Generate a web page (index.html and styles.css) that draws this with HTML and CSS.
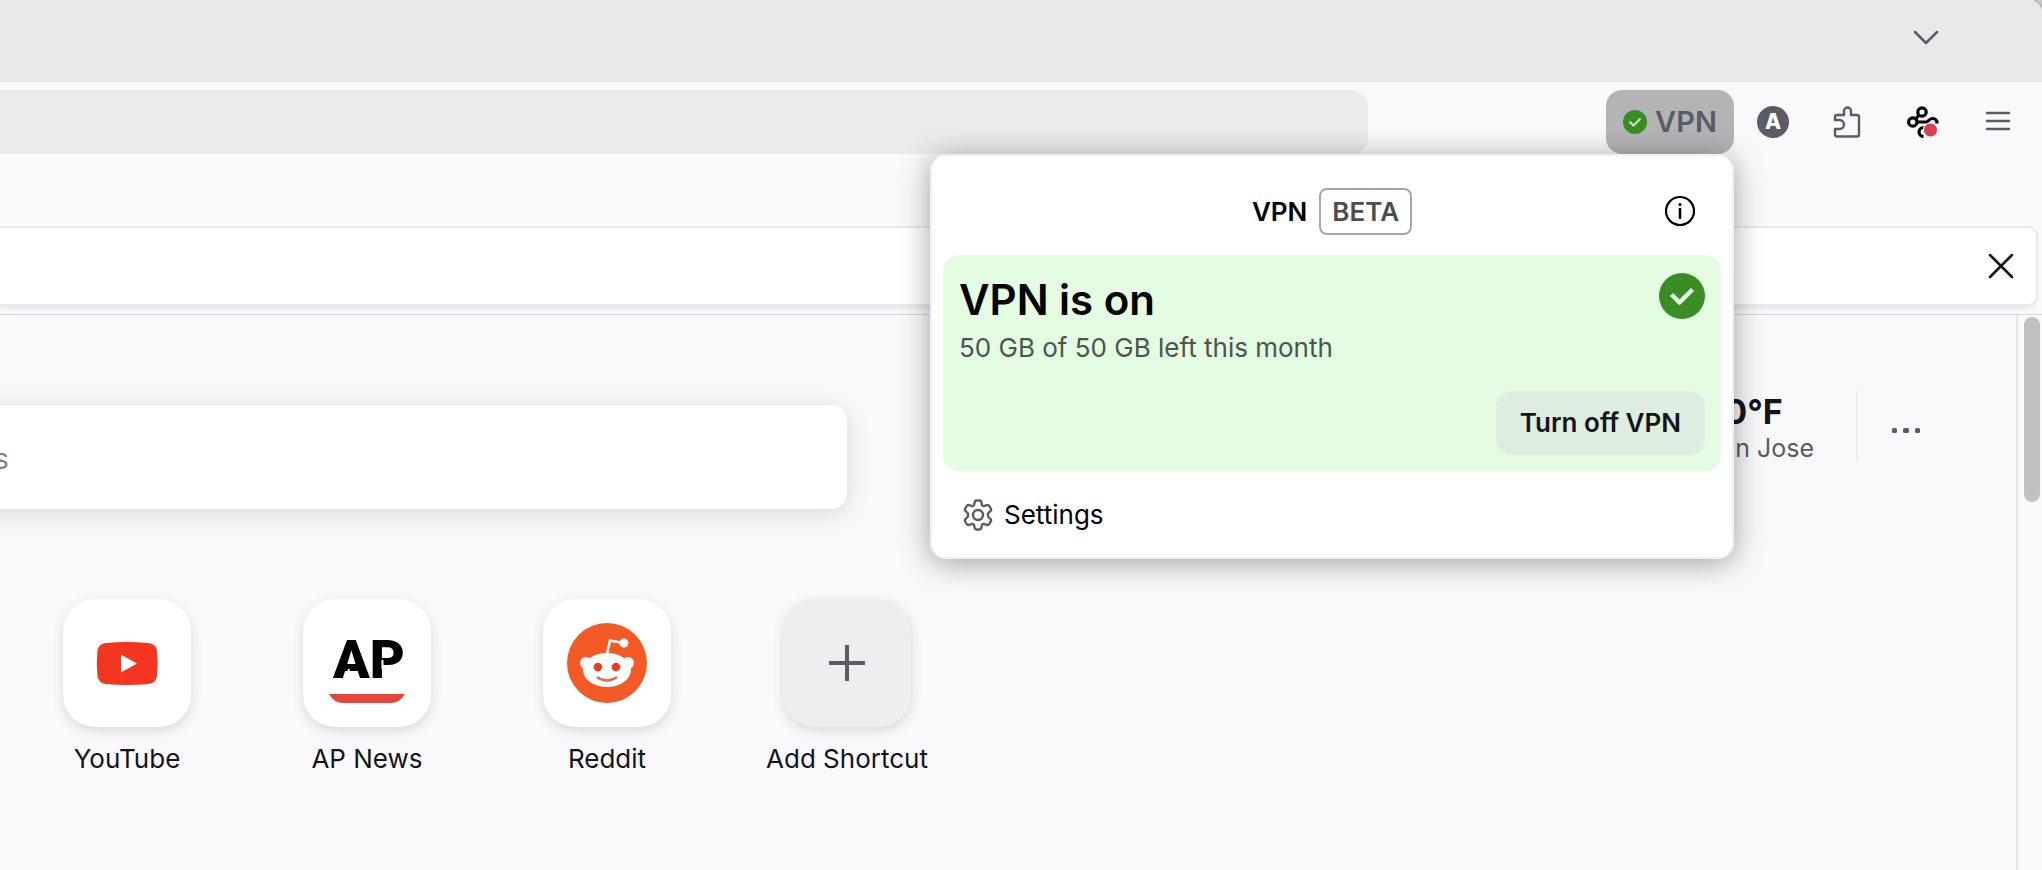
FILE: index.html
```html
<!DOCTYPE html>
<html lang="en">
<head>
    <meta charset="UTF-8">
    <meta name="viewport" content="width=device-width, initial-scale=1.0">
    <title>New Tab</title>
    <link rel="stylesheet" href="styles.css">
</head>
<body>
    <header class="tab-bar">
        <button type="button" class="icon-button" aria-label="List all tabs">
            <svg width="28" height="28" viewBox="0 0 28 28" fill="none" stroke="#5b5b66" stroke-width="2.500" stroke-linecap="round" stroke-linejoin="round">
                <path d="M3 9l11 11L25 9"/>
            </svg>
        </button>
        <span class="window-corner"></span>
    </header>

    <nav class="toolbar">
        <input type="text" class="url-bar" aria-label="Search or enter address">
        <div class="toolbar-actions">
            <div class="vpn-anchor">
                <button type="button" class="vpn-button">
                    <svg width="24" height="24" viewBox="0 0 24 24">
                        <circle cx="12" cy="12" r="12" fill="#388e25"/>
                        <path d="M6.500 11.500l4 4 7-7" fill="none" stroke="#d6dcd6" stroke-width="2"/>
                    </svg>
                    <span>VPN</span>
                </button>

                <section class="panel">
                    <div class="panel-header">
                        <h1>VPN</h1>
                        <span class="badge">BETA</span>
                        <button type="button" class="icon-button info-button" aria-label="About VPN">
                            <svg width="32" height="32" viewBox="0 0 32 32">
                                <circle cx="16" cy="16" r="14" fill="none" stroke="#000" stroke-width="2.200"/>
                                <path d="M16 14v9" stroke="#000" stroke-width="2.600" stroke-linecap="round"/>
                                <circle cx="16" cy="9.500" r="1.600"/>
                            </svg>
                        </button>
                    </div>
                    <div class="status-card">
                        <div class="status-top">
                            <div>
                                <h2>VPN is on</h2>
                                <p>50 GB of 50 GB left this month</p>
                            </div>
                            <svg width="46" height="46" viewBox="0 0 46 46">
                                <circle cx="23" cy="23" r="23" fill="#388e25"/>
                                <path d="M12.500 21.500l8 8 13-13" fill="none" stroke="#e3fce2" stroke-width="4.500" stroke-linejoin="round"/>
                            </svg>
                        </div>
                        <button type="button" class="turn-off">Turn off VPN</button>
                    </div>
                    <a href="#settings" class="settings-link">
                        <svg width="32" height="32" viewBox="0 0 32 32" fill="none" stroke="#5b5b66" stroke-width="2.400" stroke-linejoin="round">
                            <circle cx="16" cy="16" r="5"/>
                            <path d="M14.500 1.500h3Q19 1.500 19.300 3L20 6.200 21.800 7.200 25 6.100Q26.500 5.600 27.300 7L28.800 9.500Q29.600 11 28.400 12L26 14.500V17.500L28.400 20Q29.600 21 28.800 22.500L27.300 25Q26.500 26.400 25 25.900L21.800 24.800 20 25.800 19.300 29Q19 30.500 17.500 30.500H14.500Q13 30.500 12.700 29L12 25.800 10.200 24.800 7 25.900Q5.500 26.400 4.700 25L3.200 22.500Q2.400 21 3.600 20L6 17.500V14.500L3.600 12Q2.400 11 3.200 9.500L4.700 7Q5.500 5.600 7 6.100L10.200 7.200 12 6.200 12.700 3Q13 1.500 14.500 1.500Z"/>
                        </svg>
                        Settings
                    </a>
                </section>
            </div>

            <button type="button" class="icon-button" aria-label="Account">
                <span class="avatar">A</span>
            </button>
            <button type="button" class="icon-button" aria-label="Extensions">
                <svg width="32" height="32" viewBox="0 0 32 32" fill="none" stroke="#5b5b66" stroke-width="2.400" stroke-linejoin="round">
                    <path d="M4 14V11Q4 9 6 9H13V5a3.500 3.500 0 0 1 7 0V9H26Q28 9 28 11V28.500Q28 30.500 26 30.500H6Q4 30.500 4 28.500V23H8.500a4.200 4.200 0 0 0 0-9Z" transform="translate(-1 0)"/>
                </svg>
            </button>
            <button type="button" class="icon-button" aria-label="Automation extension">
                <svg width="32" height="32" viewBox="0 0 32 32" fill="none" stroke="#000" stroke-width="3.200">
                    <circle cx="15" cy="6" r="4.200"/>
                    <circle cx="5.800" cy="16" r="4.200"/>
                    <path d="M12 9l-3.500 4M10 16h9c3 0 2.500-3.500 6.500-3.500 3 0 4.500 2 4.500 5M16.500 21.500a4.500 4.500 0 0 0 0 9"/>
                    <circle cx="23.500" cy="24" r="7" fill="#d93e55" stroke="#f9f9fb" stroke-width="1"/>
                </svg>
            </button>
            <button type="button" class="icon-button" aria-label="Open menu">
                <svg width="28" height="28" viewBox="0 0 28 28" stroke="#5b5b66" stroke-width="2.400" stroke-linecap="round">
                    <path d="M3 5h22M3 13h22M3 21h22"/>
                </svg>
            </button>
        </div>
    </nav>

    <div class="notification">
        <button type="button" class="icon-button" aria-label="Dismiss">
            <svg width="28" height="28" viewBox="0 0 28 28" stroke="#15141a" stroke-width="2.500" stroke-linecap="round">
                <path d="M3 3l22 22M25 3L3 25"/>
            </svg>
        </button>
    </div>

    <div class="viewport">
        <main class="page">
            <div class="top-row">
                <input type="search" class="search" placeholder="s" aria-label="Search the web">
                <div class="weather">
                    <div class="weather-info">
                        <strong>70°F</strong>
                        <span>San Jose</span>
                    </div>
                    <button type="button" class="icon-button weather-menu" aria-label="Weather options">
                        <svg width="32" height="32" viewBox="0 0 32 32" fill="#5b5b66">
                            <rect x="2" y="14" width="5" height="5" rx="1.500"/>
                            <rect x="13" y="14" width="6" height="5" rx="1.500"/>
                            <rect x="25" y="14" width="5" height="5" rx="1.500"/>
                        </svg>
                    </button>
                </div>
            </div>

            <div class="shortcuts">
                <a href="#youtube" class="shortcut">
                    <span class="tile">
                        <svg width="80" height="80" viewBox="0 0 80 80">
                            <path d="M19 20Q40 18 61 20 69 20.500 70 28 71.500 40 70 53 69 60.500 61 61 40 63 19 61 11.500 60.500 10.500 53 9 40 10.500 28 11.500 20.500 19 20Z" fill="#f43620"/>
                            <path d="M34 31.500v18L50 40.500z" fill="#fff"/>
                        </svg>
                    </span>
                    YouTube
                </a>
                <a href="#apnews" class="shortcut">
                    <span class="tile">
                        <svg width="80" height="80" viewBox="0 0 80 80">
                            <text x="6" y="55" class="ap-text">AP</text>
                            <path d="M18.500 57l3.500-11M55.500 37v9" stroke="#fff" stroke-width="2"/>
                            <path d="M2 71h76q-5 9-14 9H16Q7 80 2 71z" fill="#e2483d"/>
                        </svg>
                    </span>
                    AP News
                </a>
                <a href="#reddit" class="shortcut">
                    <span class="tile">
                        <svg width="80" height="80" viewBox="0 0 80 80">
                            <circle cx="40" cy="40" r="40" fill="#f45a26"/>
                            <g fill="#fff">
                                <circle cx="19" cy="40" r="6"/>
                                <circle cx="61" cy="40" r="6"/>
                                <ellipse cx="40" cy="47" rx="24" ry="17"/>
                                <circle cx="57" cy="20" r="4.500"/>
                            </g>
                            <path d="M40 31l3-13.500 13 2.500" fill="none" stroke="#fff" stroke-width="2.500" stroke-linejoin="round"/>
                            <circle cx="31" cy="44" r="4.300" fill="#f43a20"/>
                            <circle cx="49" cy="44" r="4.300" fill="#f43a20"/>
                            <path d="M30 54q10 7 20 0" fill="none" stroke="#f0674a" stroke-width="2.500"/>
                        </svg>
                    </span>
                    Reddit
                </a>
                <button type="button" class="shortcut">
                    <span class="tile tile-add">
                        <svg width="36" height="36" viewBox="0 0 36 36" stroke="#5b5b66" stroke-width="4">
                            <path d="M18 0v36M0 18h36"/>
                        </svg>
                    </span>
                    Add Shortcut
                </button>
            </div>
        </main>
        <div class="scrollbar"><span class="thumb"></span></div>
    </div>
</body>
</html>
```
FILE: styles.css
```css
* {
    margin: 0;
    padding: 0;
    box-sizing: border-box;
}

body {
    font-family: "Inter", "Liberation Sans", sans-serif;
    font-size: 26px;
    line-height: 32px;
    color: #15141a;
    background-color: #f9f9fb;
    min-height: 100vh;
    display: flex;
    flex-direction: column;
    overflow: hidden;
}

button,
input {
    font: inherit;
    color: inherit;
    border: none;
    background: none;
}

a {
    color: inherit;
    text-decoration: none;
}

svg {
    display: block;
    flex-shrink: 0;
}

.icon-button {
    display: flex;
    align-items: center;
    justify-content: center;
    width: 64px;
    height: 64px;
}

/* Tab bar */
.tab-bar {
    display: flex;
    justify-content: flex-end;
    align-items: center;
    height: 82px;
    padding: 0 84px 8px 0;
    background-color: #e9e9eb;
    position: relative;
}

.window-corner {
    position: absolute;
    top: 0;
    right: 0;
    width: 10px;
    height: 10px;
    background: radial-gradient(circle at -6px 16px, #e9e9eb 17px, #a5a5a5 18px, #c8c8c8 19px);
}

/* Toolbar */
.toolbar {
    display: flex;
    justify-content: space-between;
    height: 72px;
    padding-top: 8px;
}

.url-bar {
    width: 67%;
    height: 64px;
    background-color: #ebebed;
    border-radius: 0 16px 16px 0;
}

.toolbar-actions {
    display: flex;
    gap: 11px;
    margin-right: 12px;
}

.vpn-anchor {
    position: relative;
    margin-right: -4px;
}

.vpn-button {
    display: flex;
    align-items: center;
    justify-content: center;
    gap: 8px;
    width: 128px;
    height: 64px;
    border-radius: 16px;
    background-color: #b4b4b6;
    color: #5b5b66;
    font-size: 29px;
    font-weight: 600;
}

.avatar {
    width: 32px;
    height: 32px;
    border-radius: 50%;
    background-color: #5b5b66;
    color: #fff;
    font-size: 21px;
    font-weight: 800;
    text-align: center;
}

/* VPN panel */
.panel {
    position: absolute;
    top: 64px;
    right: 0;
    z-index: 1;
    width: 804px;
    padding: 32px 11px 10px;
    background-color: #fff;
    border: 2px solid #f0f0f4;
    border-radius: 16px;
    box-shadow: 0 4px 30px rgba(12, 12, 13, 0.38);
    color: #000;
}

.panel-header {
    display: flex;
    align-items: center;
    justify-content: center;
    gap: 12px;
    margin-bottom: 20px;
    position: relative;
}

.panel-header h1 {
    font-size: 26px;
    font-weight: 600;
}

.badge {
    padding: 6px 11px;
    border: 2px solid #a6a6a6;
    border-radius: 8px;
    color: #4d4d4d;
    font-weight: 600;
    line-height: 31px;
}

.info-button {
    position: absolute;
    right: 9px;
    top: -9px;
}

.status-card {
    display: flex;
    flex-direction: column;
    padding: 18px 16px 16px;
    border-radius: 16px;
    background-color: #e3fce2;
}

.status-top {
    display: flex;
    justify-content: space-between;
    align-items: flex-start;
    margin-bottom: 27px;
}

.status-card h2 {
    margin-bottom: 5px;
    font-size: 42px;
    font-weight: 600;
    line-height: 54px;
}

.status-card p {
    color: #4d544d;
}

.turn-off {
    align-self: flex-end;
    height: 64px;
    padding: 0 24px;
    border-radius: 16px;
    background-color: #ddeddf;
    color: #15141a;
    font-weight: 600;
}

.settings-link {
    display: flex;
    align-items: center;
    gap: 10px;
    margin-top: 12px;
    height: 64px;
    padding-left: 19px;
}

/* Notification strip */
.notification {
    display: flex;
    justify-content: flex-end;
    align-items: center;
    height: 76px;
    margin: 74px 6px 10px 0;
    padding-right: 3px;
    background-color: #fff;
    border-radius: 0 8px 8px 0;
    box-shadow: 0 0 0 2px #ebebed, 0 4px 4px #e2e2e4;
}

/* New tab page */
.viewport {
    display: flex;
    flex: 1;
    border-top: 1px solid #d5d5d9;
}

.page {
    flex: 1;
    padding-top: 90px;
}

.top-row {
    display: flex;
    justify-content: space-between;
    align-items: flex-start;
    margin-bottom: 90px;
}

/* The search box runs off the left side of the page */
.search {
    width: calc(42% + 40px);
    height: 104px;
    margin-left: -40px;
    padding-top: 4px;
    background-color: #fff;
    border-radius: 16px;
    box-shadow: 0 4px 24px rgba(0, 0, 0, 0.14);
    font-size: 28px;
    text-indent: 34px;
}

.search::placeholder {
    color: #808084;
    opacity: 1;
}

.weather {
    display: flex;
    margin-top: -15px;
    margin-right: 78px;
}

.weather-info {
    display: flex;
    flex-direction: column;
    height: 70px;
    padding-top: 2px;
    padding-right: 42px;
    border-right: 2px solid #ededf0;
    color: #5b5b5f;
    font-size: 25px;
}

.weather-info strong {
    color: #15141a;
    font-size: 34px;
    font-weight: 700;
    line-height: 40px;
}

.weather-menu {
    margin-left: 16px;
    margin-top: 8px;
}

.shortcuts {
    display: flex;
    gap: 40px;
    padding-left: 27px;
}

.shortcut {
    display: flex;
    flex-direction: column;
    align-items: center;
    gap: 16px;
    width: 200px;
}

.tile {
    display: flex;
    align-items: center;
    justify-content: center;
    width: 128px;
    height: 128px;
    border-radius: 32px;
    background-color: #fff;
    box-shadow: 0 4px 12px rgba(0, 0, 0, 0.13);
}

.tile-add {
    background-color: #eeeef0;
}

.ap-text {
    font-family: "Roboto", sans-serif;
    font-size: 54px;
    font-weight: 900;
}

/* Scrollbar */
.scrollbar {
    width: 26px;
    padding: 2px 2px 0 6px;
    background-color: #fafafa;
    border-left: 2px solid #e6e6e8;
}

.thumb {
    display: block;
    height: 185px;
    width: 16px;
    border-radius: 8px;
    background-color: #c1c1c1;
}
```
